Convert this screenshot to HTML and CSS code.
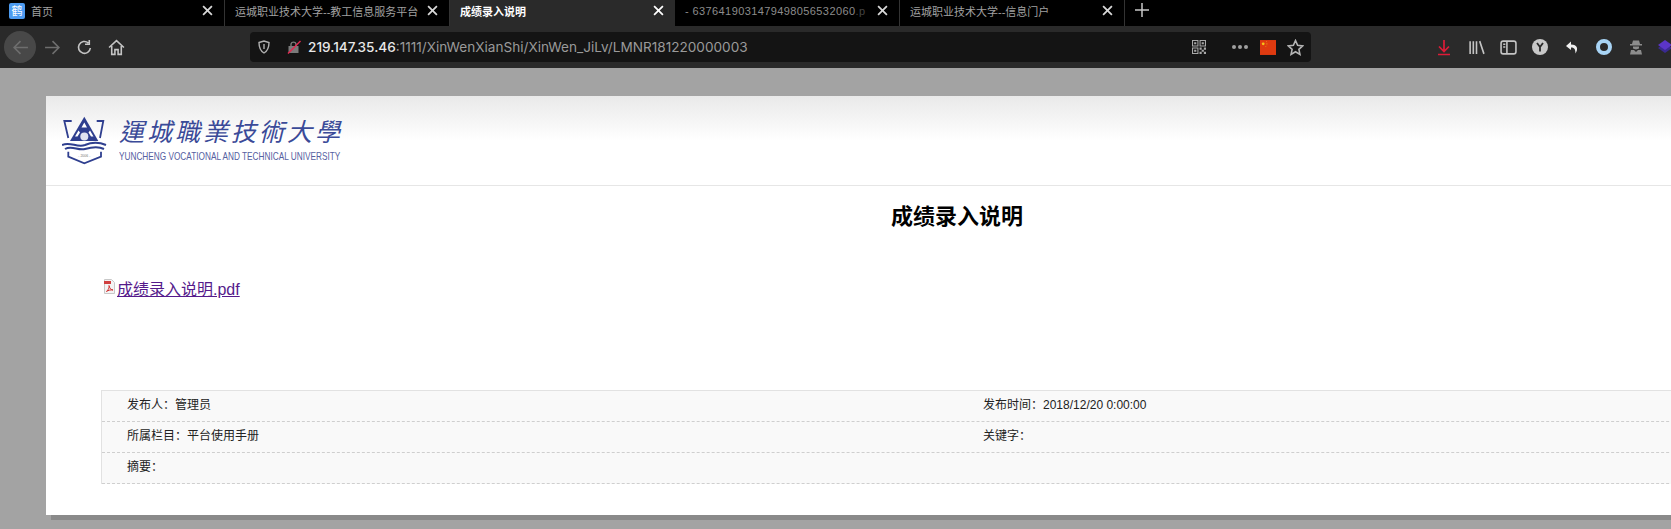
FILE: index.html
```html
<!DOCTYPE html>
<html>
<head>
<title>成绩录入说明</title>
<meta http-equiv="Content-Type" content="text/html; charset=utf-8" />
<link rel="stylesheet" href="styles.css">
</head>
<body>
<div class="tabbar">
	<div class="tab">
		<span class="favicon">鹤</span>
		<span class="tab-title">首页</span>
		<svg class="tab-close" viewBox="0 0 10 10"><path d="M1 1L9 9M9 1L1 9"/></svg>
	</div>
	<div class="tab">
		<span class="tab-title">运城职业技术大学--教工信息服务平台</span>
		<svg class="tab-close" viewBox="0 0 10 10"><path d="M1 1L9 9M9 1L1 9"/></svg>
	</div>
	<div class="tab tab-active">
		<span class="tab-title">成绩录入说明</span>
		<svg class="tab-close" viewBox="0 0 10 10"><path d="M1 1L9 9M9 1L1 9"/></svg>
	</div>
	<div class="tab">
		<span class="tab-title tab-num">- 6376419031479498056532060<span class="tab-fade">.p</span></span>
		<svg class="tab-close" viewBox="0 0 10 10"><path d="M1 1L9 9M9 1L1 9"/></svg>
	</div>
	<div class="tab">
		<span class="tab-title">运城职业技术大学--信息门户</span>
		<svg class="tab-close" viewBox="0 0 10 10"><path d="M1 1L9 9M9 1L1 9"/></svg>
	</div>
	<svg class="tab-new" viewBox="0 0 14 14"><path d="M7 0V14M0 7H14"/></svg>
</div>
<div class="toolbar">
	<div class="nav">
		<div class="nav-cell nav-back">
			<svg viewBox="0 0 16 16"><path d="M15 8H2M8 2L2 8L8 14"/></svg>
		</div>
		<div class="nav-cell nav-off">
			<svg viewBox="0 0 16 16"><path d="M1 8H14M8 2L14 8L8 14"/></svg>
		</div>
		<div class="nav-cell">
			<svg viewBox="0 0 16 16"><path d="M13.500 8.500A5.600 5.600 0 1 1 11.500 3.600M12.500 1V5H8.500"/></svg>
		</div>
		<div class="nav-cell">
			<svg viewBox="0 0 16 16"><path d="M1 8L8 1.500L15 8M3.500 6.500V14.500H6.500V10H9.500V14.500H12.500V6.500"/></svg>
		</div>
	</div>
	<div class="urlbar">
		<svg class="url-shield" viewBox="0 0 14 14"><path d="M2 2.500L7 1L12 2.500C12 8 10.500 11 7 13C3.500 11 2 8 2 2.500Z"/><path d="M7 4V9"/></svg>
		<svg class="url-lock" viewBox="0 0 14 14"><rect class="lock-body" x="1.500" y="6" width="10" height="7"/><path class="lock-arc" d="M4 6V4A2.600 2.600 0 0 1 9 4V6"/><path class="lock-slash" d="M1 13.500L13.500 1"/></svg>
		<div class="url-text"><span class="url-host">219.147.35.46</span>:1111/XinWenXianShi/XinWen_JiLv/LMNR181220000003</div>
		<svg class="url-qr" viewBox="0 0 13 13">
			<path d="M0 0H6V6H0ZM1 1V5H5V1ZM2 2H4V4H2ZM7 0H13V6H7ZM8 1V5H12V1ZM9 2H11V4H9ZM0 7H6V13H0ZM1 8V12H5V8ZM2 9H4V11H2ZM7 7H9V9H7ZM11 7H13V9H11ZM9 9H11V11H9ZM7 11H9V13H7ZM11 11H13V13H11Z"/>
		</svg>
		<div class="url-dots"><i></i><i></i><i></i></div>
		<svg class="url-flag" viewBox="0 0 15 14"><rect width="15" height="14"/><circle cx="3" cy="3.500" r="1.300"/><circle cx="6" cy="1.500" r=".4"/><circle cx="6.500" cy="3" r=".4"/><circle cx="6.500" cy="4.500" r=".4"/><circle cx="5.500" cy="6" r=".4"/></svg>
		<svg class="url-star" viewBox="0 0 16 16"><path d="M8 1.500L10 6L14.800 6.500L11.200 9.700L12.200 14.500L8 12L3.800 14.500L4.800 9.700L1.200 6.500L6 6Z"/></svg>
	</div>
	<div class="tools">
		<div class="tool"><svg class="tool-download" viewBox="0 0 14 17"><path d="M7 1V12M2 7.500L7 12.500L12 7.500M1 15.500H13"/></svg></div>
		<div class="tool"><svg class="tool-line" viewBox="0 0 16 16"><path d="M2 2V14M5 2V14M8 2V14M11 2L15 14"/></svg></div>
		<div class="tool"><svg class="tool-line" viewBox="0 0 16 16"><rect x="1" y="2" width="14" height="12" rx="2"/><path d="M6.500 2V14M3 5H5M3 7.500H5"/></svg></div>
		<div class="tool"><svg class="tool-fill" viewBox="0 0 16 16"><circle cx="8" cy="8" r="8"/><path class="tool-y" d="M5 4L8 8L11 4M8 8V12.500"/></svg></div>
		<div class="tool"><svg class="tool-white" viewBox="0 0 16 16"><path d="M7 2.500L2 7L7 11V8.500C10 8.500 11.500 10 11.500 14.500C14.500 10 13.500 5.500 7 5.500Z"/></svg></div>
		<div class="tool"><div class="tool-ring"></div></div>
		<div class="tool"><svg class="tool-spy" viewBox="0 0 14 16"><path d="M4 1.500H10L11 5H13V6.500H1V5H3ZM4 7.500H10V9.500L7 10.500L4 9.500ZM2 11H5L7 13L9 11H12L13 15.500H1Z"/></svg></div>
		<div class="tool tool-last"><svg class="tool-gem" viewBox="0 0 14 16"><path class="gem-dark" d="M0 9L7 4L14 9L7 14Z"/><path class="gem-top" d="M0 6L7 1L14 6L7 11Z"/></svg></div>
	</div>
</div>
<div class="viewport">
	<div class="page">
		<div class="page-head">
			<div class="logo">
				<svg class="logo-mark" viewBox="0 0 45 50">
					<path class="mark-line" d="M9.700 6H2.300L6.300 23M34.700 6H41.300L38 23"/>
					<path class="mark-fill" d="M22.300 1.700L8 26H36.300Z"/>
					<path class="mark-white" d="M22.300 7.500L19.500 12.500H25ZM16.500 15.500L13 21.500H15.500L18 17.500ZM28 15.500L31.500 21.500H29L26.500 17.500Z"/>
					<circle class="mark-sun" cx="22.300" cy="21.500" r="4"/>
					<path class="mark-wave" d="M0 30C8 26 15 33 23 30C30 27 37 27 44 30M3 34C10 30 16 36 23 34C30 32 36 31 42 34"/>
					<path class="mark-line" d="M6.300 36.700V41.700L22.300 48.300L39 41.700V36.700"/>
					<text class="mark-year" x="22.300" y="41.500">- 2006 -</text>
				</svg>
				<div class="logo-text">
					<div class="logo-cn">運城職業技術大學</div>
					<div class="logo-en">YUNCHENG VOCATIONAL AND TECHNICAL UNIVERSITY</div>
				</div>
			</div>
		</div>
		<div class="page-body">
			<h1 class="title">成绩录入说明</h1>
			<div class="attach">
				<svg class="pdf-icon" viewBox="0 0 13 15"><path class="pdf-paper" d="M1.500 .5H8.500L11.500 3.500V14.500H1.500Z"/><rect class="pdf-band" x="1" y="2" width="7" height="3"/><path class="pdf-mark" d="M3.500 12.500C6 10 6.500 8 6 6.500C6.500 9 7.500 10.500 10 11C7.500 10.500 5 11.500 3.500 12.500Z"/></svg>
				<a class="attach-link" href="#">成绩录入说明.pdf</a>
			</div>
			<div class="info">
				<div class="info-row">
					<div class="info-cell">发布人：管理员</div>
					<div class="info-cell">发布时间：2018/12/20 0:00:00</div>
				</div>
				<div class="info-row">
					<div class="info-cell">所属栏目：平台使用手册</div>
					<div class="info-cell">关键字：</div>
				</div>
				<div class="info-row">
					<div class="info-cell">摘要：</div>
				</div>
			</div>
		</div>
	</div>
</div>
</body>
</html>
```

FILE: styles.css
```css
html, body {
	margin: 0;
	height: 100%;
	overflow: hidden;
}
body {
	width: 1671px;
	height: 529px;
	font-family: "Liberation Sans", "Noto Sans CJK SC", sans-serif;
	background-color: #a3a3a3;
}
svg {
	flex: none;
	display: block;
}

/* tabs */
.tabbar {
	display: flex;
	align-items: stretch;
	height: 26px;
	background-color: #000;
}
.tab {
	display: flex;
	align-items: center;
	box-sizing: border-box;
	width: 225px;
	padding: 0 11px 5px 10px;
	font-size: 11px;
	color: #a0a0a0;
	border-right: solid #333 1px;
}
.tab-active {
	background-color: #2a2a2a;
	color: #fff;
	font-weight: bold;
	border-right: none;
}
.tab-title {
	flex: 1;
	white-space: nowrap;
}
.tab-num {
	color: #8c8c8c;
	letter-spacing: .4px;
}
.tab-fade {
	color: #444;
}
.favicon {
	width: 16px;
	height: 16px;
	margin: 0 6px 0 -1px;
	border-radius: 2px;
	background-color: #4d9bf0;
	color: #fff;
	font-size: 11px;
	line-height: 16px;
	text-align: center;
}
.tab-close {
	width: 11px;
	height: 11px;
	fill: none;
	stroke: #d8d8d8;
	stroke-width: 1.600;
}
.tab-active .tab-close { stroke: #fff; }
.tab-new {
	width: 14px;
	height: 14px;
	margin: 3px 0 0 10px;
	fill: none;
	stroke: #c8c8c8;
	stroke-width: 1.500;
}

/* toolbar */
.toolbar {
	display: flex;
	align-items: center;
	height: 42px;
	background-color: #2a2a2a;
	overflow: hidden;
}
.nav {
	flex: none;
	display: flex;
	align-items: center;
	width: 250px;
	padding-left: 4px;
	box-sizing: border-box;
}
.nav-cell {
	display: flex;
	align-items: center;
	justify-content: center;
	width: 32px;
	height: 32px;
}
.nav-cell svg {
	width: 17px;
	height: 17px;
	fill: none;
	stroke: #c4c4c4;
	stroke-width: 1.500;
}
.nav-back {
	border-radius: 50%;
	background-color: #484848;
}
.nav-back svg, .nav-off svg {
	stroke: #6e6e6e;
}
.urlbar {
	flex: none;
	display: flex;
	align-items: center;
	width: 1061px;
	height: 30px;
	padding-left: 7px;
	box-sizing: border-box;
	background-color: #141414;
	border-radius: 4px;
}
.url-shield {
	width: 14px;
	height: 14px;
	fill: none;
	stroke: #b0b0b0;
	stroke-width: 1.400;
}
.url-lock {
	width: 14px;
	height: 14px;
	margin-left: 16px;
}
.lock-body { fill: #7a7a7a; }
.lock-arc {
	fill: none;
	stroke: #7a7a7a;
	stroke-width: 1.400;
}
.lock-slash {
	stroke: #e22850;
	stroke-width: 1.500;
}
.url-text {
	flex: none;
	width: 884px;
	margin-left: 7px;
	font-family: Inter, "Liberation Sans", sans-serif;
	font-size: 13.600px;
	color: #9a9a9a;
	white-space: nowrap;
}
.url-host {
	color: #e8e8e8;
	font-weight: 500;
}
.url-qr {
	width: 14px;
	height: 14px;
	fill: #a8a8a8;
	fill-rule: evenodd;
}
.url-dots {
	display: flex;
	gap: 2px;
	margin-left: 26px;
}
.url-dots i {
	width: 4px;
	height: 4px;
	border-radius: 50%;
	background-color: #a0a0a0;
}
.url-flag {
	width: 16px;
	height: 15px;
	margin-left: 12px;
	fill: #de3a10;
}
.url-flag circle { fill: #f5c518; }
.url-star {
	width: 17px;
	height: 17px;
	margin-left: 11px;
	fill: none;
	stroke: #b4b4b4;
	stroke-width: 1.500;
}
.tools {
	flex: none;
	display: flex;
	align-items: center;
	margin-left: 117px;
}
.tool {
	flex: none;
	display: flex;
	align-items: center;
	justify-content: center;
	width: 32px;
}
.tool-last {
	justify-content: flex-start;
	padding-left: 6px;
	box-sizing: border-box;
}
.tool-download {
	width: 14px;
	height: 17px;
	fill: none;
	stroke: #dc1c38;
	stroke-width: 1.700;
}
.tool-line {
	width: 17px;
	height: 17px;
	fill: none;
	stroke: #c4c4c4;
	stroke-width: 1.500;
}
.tool-fill {
	width: 16px;
	height: 16px;
	fill: #c8c8c8;
}
.tool-y {
	fill: none;
	stroke: #2a2a2a;
	stroke-width: 1.800;
}
.tool-white {
	width: 16px;
	height: 16px;
	fill: #f0f0f0;
}
.tool-ring {
	box-sizing: border-box;
	width: 16px;
	height: 16px;
	border-radius: 50%;
	border: solid #a8d4f5 4px;
}
.tool-spy {
	width: 14px;
	height: 16px;
	fill: #8c8c8c;
}
.tool-gem {
	width: 14px;
	height: 16px;
}
.gem-top { fill: #5b35c8; }
.gem-dark { fill: #3a2a90; }

/* page */
.viewport {
	height: 461px;
	padding: 28px 0 0 46px;
	box-sizing: border-box;
	overflow: hidden;
}
.page {
	width: 1822px;
	height: 419px;
	background-color: #fff;
	box-shadow: 5px 5px 0 #8a8a8a;
}
.page-head {
	box-sizing: border-box;
	height: 90px;
	padding: 19px 0 0 16px;
	border-bottom: solid #e6e6e6 1px;
	background: linear-gradient(#e9e9e9, #fff 50%);
}
.logo {
	display: flex;
	align-items: flex-start;
}
.logo-mark {
	width: 45px;
	height: 50px;
}
.mark-line {
	fill: none;
	stroke: #2f3f8f;
	stroke-width: 1.800;
}
.mark-fill { fill: #2f3f8f; }
.mark-white { fill: #fff; }
.mark-sun { fill: #dfe3f0; }
.mark-wave {
	fill: none;
	stroke: #2f3f8f;
	stroke-width: 2;
}
.mark-year {
	font-size: 3.500px;
	text-anchor: middle;
	fill: #777;
}
.logo-text {
	margin-left: 12px;
}
.logo-cn {
	font-family: "Noto Sans CJK TC", sans-serif;
	font-size: 25px;
	line-height: 30px;
	letter-spacing: 3px;
	font-style: italic;
	white-space: nowrap;
	color: #3a4a98;
}
.logo-en {
	margin-top: 6px;
	font-size: 10.500px;
	line-height: 10px;
	white-space: nowrap;
	color: #55609f;
	transform: scaleX(.785);
	transform-origin: left center;
}
.page-body {
	padding-left: 55px;
}
.title {
	margin: 17px 0 0;
	padding-right: 55px;
	font-size: 22px;
	line-height: 28px;
	font-weight: bold;
	text-align: center;
	color: #000;
}
.attach {
	display: flex;
	align-items: center;
	height: 22px;
	margin: 46px 0 0 2px;
}
.pdf-icon {
	width: 13px;
	height: 15px;
	margin: -4px 1px 0 0;
}
.pdf-paper {
	fill: #f4f4f4;
	stroke: #c8c8c8;
	stroke-width: 1;
}
.pdf-band { fill: #d04040; }
.pdf-mark {
	fill: none;
	stroke: #d03030;
	stroke-width: 1;
}
.attach-link {
	font-size: 16px;
	color: #551a8b;
}
.info {
	width: 1767px;
	margin-top: 91px;
	border-top: solid #e2e2e2 1px;
	border-left: solid #e2e2e2 1px;
	background-color: #f9f9f9;
	font-size: 12px;
	color: #222;
}
.info-row {
	display: flex;
	align-items: center;
	box-sizing: border-box;
	height: 31px;
	padding: 0 0 5px 25px;
	border-bottom: dashed #cfcfcf 1px;
}
.info-cell {
	width: 856px;
}
```
